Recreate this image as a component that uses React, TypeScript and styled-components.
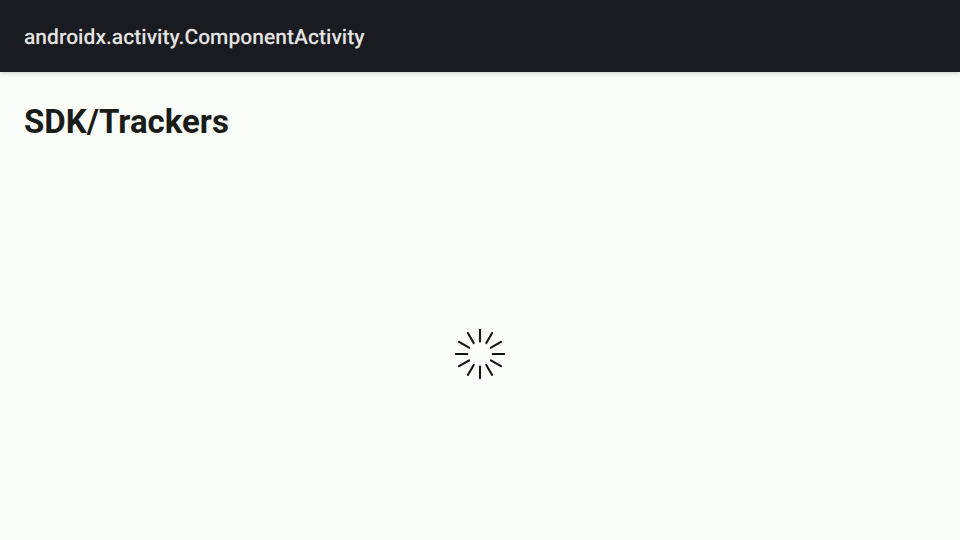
import React from "react";
import styled, { createGlobalStyle } from "styled-components";

const GlobalStyle = createGlobalStyle`
  html, body { margin: 0; padding: 0; }
  body { font-family: Roboto, sans-serif; overflow: hidden; background: #fbfef8; }
`;

const Screen = styled.div`
  display: flex;
  flex-direction: column;
  width: 960px;
  height: 540px;
  background: #fbfef8;
`;

const AppBar = styled.header`
  display: flex;
  align-items: center;
  flex: none;
  box-sizing: border-box;
  height: 72px;
  padding: 4px 24px 0;
  background: #1a1b20;
  box-shadow: 0 1px 5px rgba(0, 0, 0, 0.2);
`;

const AppTitle = styled.span`
  font-size: 21px;
  line-height: 28px;
  font-weight: 500;
  letter-spacing: 0.04px;
  color: #e3e3e1;
  white-space: nowrap;
  text-rendering: geometricPrecision;
`;

const Heading = styled.h1`
  margin: 29px 24px 0;
  font-size: 33px;
  line-height: 42px;
  font-weight: 700;
  color: #1a1c19;
`;

const Content = styled.main`
  display: flex;
  flex: 1;
  align-items: center;
  justify-content: center;
  padding-top: 25px;
`;

const SpinnerIcon = styled.svg`
  display: block;
  width: 60px;
  height: 60px;
`;

const SPOKES = Array.from({ length: 12 }, (_, i) => i * 30);

function Spinner() {
  return (
    <SpinnerIcon viewBox="-30 -30 60 60" stroke="#141613" strokeWidth={2.1} strokeLinecap="round">
      {SPOKES.map((angle) => (
        <line key={angle} x1={0} y1={-12.6} x2={0} y2={-24.2} transform={`rotate(${angle})`} />
      ))}
    </SpinnerIcon>
  );
}

export default function App() {
  return (
    <Screen>
      <GlobalStyle />
      <AppBar>
        <AppTitle>androidx.activity.ComponentActivity</AppTitle>
      </AppBar>
      <Heading>SDK/Trackers</Heading>
      <Content>
        <Spinner />
      </Content>
    </Screen>
  );
}
